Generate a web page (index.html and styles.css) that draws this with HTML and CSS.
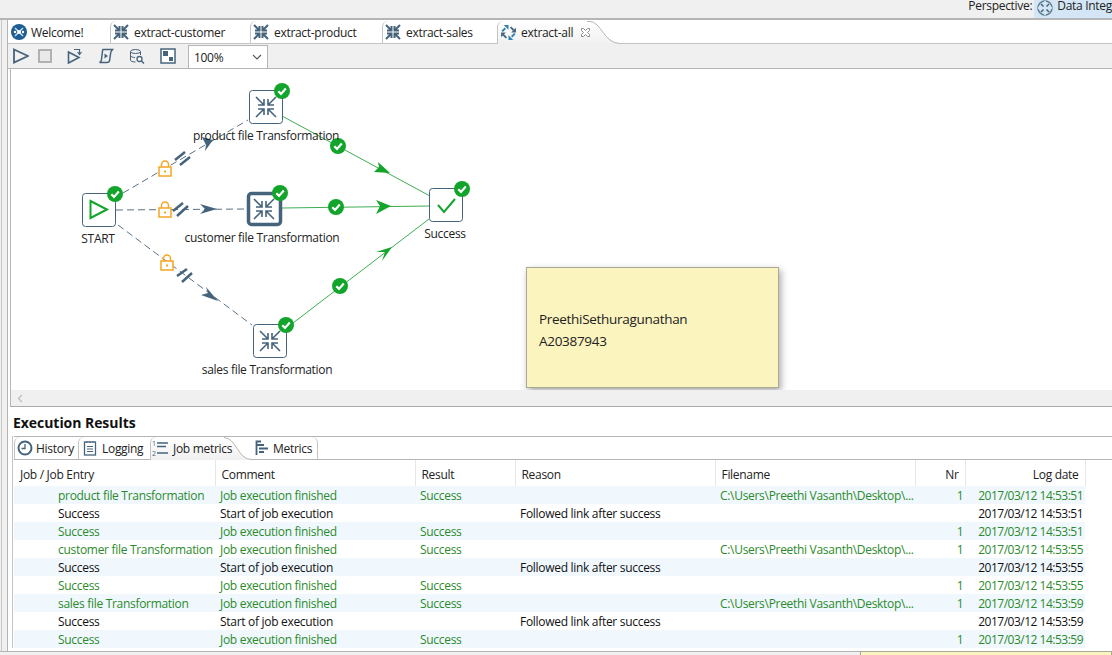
FILE: index.html
```html
<!DOCTYPE html>
<html lang="en">
<head>
    <meta charset="UTF-8">
    <meta name="viewport" content="width=device-width, initial-scale=1.0">
    <title>extract-all</title>
    <link rel="stylesheet" href="styles.css">
</head>
<body>
    <svg class="defs" width="0" height="0">
        <defs>
            <linearGradient id="activeFill" x1="0" y1="0" x2="0" y2="1">
                <stop offset="0" stop-color="#fff"/>
                <stop offset="1" stop-color="#f0f0f0"/>
            </linearGradient>
            <symbol id="compress" viewBox="0 0 24 24">
                <g fill="none" stroke="#46637c" stroke-width="1.6">
                    <path d="M2 2 10 10M10 4V10H4"/>
                    <path d="M22 2 14 10M14 4V10H20"/>
                    <path d="M2 22 10 14M10 20V14H4"/>
                    <path d="M22 22 14 14M14 20V14H20"/>
                </g>
            </symbol>
            <symbol id="compress-bold" viewBox="0 0 16 16">
                <g fill="none" stroke="#46637c" stroke-width="2">
                    <path d="M1 1 6 6M6.500 2V6.500H2"/>
                    <path d="M15 1 10 6M9.500 2V6.500H14"/>
                    <path d="M1 15 6 10M6.500 14V9.500H2"/>
                    <path d="M15 15 10 10M9.500 14V9.500H14"/>
                </g>
            </symbol>
            <symbol id="badge" viewBox="0 0 16 16">
                <circle cx="8" cy="8" r="8" fill="#13a52b"/>
                <path d="M4.300 8.200 7 10.900 11.800 5.600" fill="none" stroke="#fff" stroke-width="2.200"/>
            </symbol>
            <symbol id="lock" viewBox="0 0 14 17">
                <path d="M3.500 7V4.500a3.500 3.500 0 0 1 7 0V7" fill="none" stroke="#f5a623" stroke-width="1.500"/>
                <rect x="1" y="7" width="12" height="9" fill="#fff" stroke="#f5a623" stroke-width="1.500"/>
                <rect x="6" y="10.500" width="2" height="2" fill="#f5a623"/>
            </symbol>
        </defs>
    </svg>

    <div class="topbar">
        <span class="perspective-label">Perspective:</span>
        <span class="perspective-btn">
            <svg width="16" height="16" viewBox="0 0 16 16"><circle cx="8" cy="8" r="7" fill="none" stroke="#5f7f96" stroke-width="1.500"/><path d="M8 1V15M1 8H15" stroke="#d4e6f5" stroke-width="2"/><path d="M4 4 6.500 6.500M12 4 9.500 6.500M4 12 6.500 9.500M12 12 9.500 9.500" stroke="#46637c" stroke-width="1.500"/></svg>
            Data Integ
        </span>
    </div>

    <div class="shell">
        <div class="editor-tabs">
            <div class="tab tab-welcome">
                <svg width="16" height="16" viewBox="0 0 16 16"><circle cx="8" cy="8" r="8" fill="#1d5f95"/><path d="M4 4 12 12M12 4 4 12" stroke="#cfe6f7" stroke-width="1.400"/><circle cx="8" cy="8" r="2" fill="#fff"/><circle cx="4" cy="8" r="1.200" fill="#fff"/><circle cx="12" cy="8" r="1.200" fill="#fff"/></svg>
                Welcome!
            </div>
            <div class="tab tab-customer"><svg width="16" height="16"><use href="#compress-bold"/></svg>extract-customer</div>
            <div class="tab tab-product"><svg width="16" height="16"><use href="#compress-bold"/></svg>extract-product</div>
            <div class="tab tab-sales"><svg width="16" height="16"><use href="#compress-bold"/></svg>extract-sales</div>
            <div class="tab tab-all">
                <svg width="17" height="17" viewBox="0 0 16 16">
                    <g fill="none" stroke-width="1.800">
                        <path d="M2 7 5 4" stroke="#2f7fb0"/><path d="M10 3 13 6" stroke="#46637c"/>
                        <path d="M14 9 11 12" stroke="#2f7fb0"/><path d="M6 13 3 10" stroke="#46637c"/>
                    </g>
                    <path d="M8 1H3.500L8 5.500Z" fill="#2f7fb0"/><path d="M15 8V3.500L10.500 8Z" fill="#46637c"/>
                    <path d="M8 15H12.500L8 10.500Z" fill="#2f7fb0"/><path d="M1 8V12.500L5.500 8Z" fill="#46637c"/>
                </svg>
                extract-all
                <svg class="tab-close" width="11" height="11" viewBox="0 0 11 11"><path d="M1.500 1.500H3.500L5.500 3.500 7.500 1.500H9.500V3.500L7.500 5.500 9.500 7.500V9.500H7.500L5.500 7.500 3.500 9.500H1.500V7.500L3.500 5.500 1.500 3.500Z" fill="#fff" stroke="#8a8a8a"/></svg>
                <svg class="tab-curve" width="33" height="23" viewBox="0 0 33 23"><path d="M0 0H3C14 0 17 22 33 22V23H0Z" fill="url(#activeFill)"/><path d="M0 .5H3C14 .5 17 22.500 33 22.500" fill="none" stroke="#b5b5b5"/></svg>
            </div>
        </div>

        <div class="toolbar">
            <svg class="tool tool-play" width="16" height="16" viewBox="0 0 16 16"><path d="M1 1.500 15 8 1 14.500Z" fill="none" stroke="#46637c" stroke-width="1.800"/></svg>
            <svg class="tool tool-stop" width="16" height="16" viewBox="0 0 16 16"><rect x="2" y="2" width="12" height="12" fill="#e9e9e9" stroke="#ababab" stroke-width="1.800"/></svg>
            <svg class="tool" width="16" height="16" viewBox="0 0 16 16"><path d="M1.500 4 12 9.500 1.500 15Z" fill="none" stroke="#46637c" stroke-width="1.600"/><path d="M7 1.500H12.500V5.500M14.500 4 12.500 6.500 10.500 4" fill="none" stroke="#46637c" stroke-width="1.200"/></svg>
            <svg class="tool" width="16" height="16" viewBox="0 0 16 16"><path d="M5 1.500H14.500C13 3 12.500 4 12.500 6L11.500 13C11 14.500 10 14.500 9 14.500H1.500C3 14 3.500 13 3.500 11.500L4.500 3C4.500 2 4.700 1.800 5 1.500Z" fill="none" stroke="#46637c" stroke-width="1.500"/><path d="M6.500 5.500 10 8 6.500 10.500Z" fill="#46637c"/></svg>
            <svg class="tool" width="16" height="16" viewBox="0 0 16 16"><ellipse cx="6.500" cy="3.500" rx="5" ry="2" fill="none" stroke="#46637c"/><path d="M1.500 3.500V12C1.500 13 3 14 6.500 14M11.500 3.500V7M1.500 7.500C2 9 4 9.500 6 9.500" fill="none" stroke="#46637c"/><circle cx="10.500" cy="11" r="2.500" fill="#fff" stroke="#46637c" stroke-width="1.300"/><path d="M12.500 13 15 15.500" stroke="#46637c" stroke-width="1.500"/></svg>
            <svg class="tool tool-last" width="16" height="16" viewBox="0 0 16 16"><rect x="1" y="1" width="14" height="14" fill="#fff" stroke="#46637c" stroke-width="1.500"/><rect x="3" y="3" width="5" height="5" fill="#46637c"/><rect x="9" y="9" width="4" height="4" fill="#46637c"/></svg>
            <div class="zoom-select">100%
                <svg width="10" height="6" viewBox="0 0 10 6"><path d="M1 1 5 5 9 1" fill="none" stroke="#555" stroke-width="1.100"/></svg>
            </div>
        </div>

        <div class="canvas">
            <svg class="diagram" width="1101" height="321" viewBox="11 69 1101 321">
                <!-- hops from START -->
                <g stroke="#5a7184" stroke-width="1" stroke-dasharray="7 4" fill="none">
                    <path d="M123 193 248 120"/>
                    <path d="M116 210 247 209"/>
                    <path d="M118 225 252 325"/>
                </g>
                <g fill="#46637c">
                    <path d="M213 140 202 137 206 145 205 151Z"/>
                    <path d="M217 209 200 204 205 209 200 214Z"/>
                    <path d="M218 301 206 287 208 293 201 295Z"/>
                </g>
                <g stroke="#46637c" stroke-width="2.500">
                    <path d="M175 160 185 152M180 165 190 157"/>
                    <path d="M173 211 183 203M177 216 188 206"/>
                    <path d="M177 276 187 269M182 282 192 273"/>
                </g>
                <use href="#lock" x="158" y="160" width="14" height="17"/>
                <use href="#lock" x="158" y="201" width="14" height="17"/>
                <use href="#lock" x="160" y="254" width="14" height="17"/>

                <!-- hops to Success -->
                <g stroke="#3fae52" stroke-width="1" fill="none">
                    <path d="M282 116 430 196"/>
                    <path d="M282 208 430 206"/>
                    <path d="M293 323 429 219"/>
                </g>
                <g fill="#13a52b">
                    <path d="M390 173 378 162 379 167 374 172Z"/>
                    <path d="M391 206 376 200 380 206 376 214Z"/>
                    <path d="M392 247 376 252 385 252 382 261Z"/>
                </g>
                <use href="#badge" x="330" y="138" width="16" height="16"/>
                <use href="#badge" x="328" y="199" width="16" height="16"/>
                <use href="#badge" x="332" y="278" width="16" height="16"/>

                <!-- entries -->
                <g fill="#fff" stroke="#46637c">
                    <rect x="82.500" y="193.500" width="33" height="33" rx="3"/>
                    <rect x="249.500" y="90.500" width="33" height="33" rx="3"/>
                    <rect x="248.500" y="193.500" width="32" height="31" rx="3" stroke-width="3.500"/>
                    <rect x="429.500" y="188.500" width="33" height="33" rx="3"/>
                    <rect x="253.500" y="324.500" width="33" height="33" rx="3"/>
                </g>
                <path d="M90.500 201 107 209.500 90.500 218Z" fill="none" stroke="#13a52b" stroke-width="2"/>
                <path d="M438 205 444 212 455 199" fill="none" stroke="#13a52b" stroke-width="2"/>
                <use href="#compress" x="254" y="95" width="24" height="24"/>
                <use href="#compress" x="252" y="197" width="24" height="24"/>
                <use href="#compress" x="258" y="329" width="24" height="24"/>
                <use href="#badge" x="274" y="83" width="16" height="16"/>
                <use href="#badge" x="107" y="186" width="16" height="16"/>
                <use href="#badge" x="272" y="185" width="16" height="16"/>
                <use href="#badge" x="454" y="181" width="16" height="16"/>
                <use href="#badge" x="278" y="317" width="16" height="16"/>

                <g class="entry-label" text-anchor="middle">
                    <text x="266" y="140">product file Transformation</text>
                    <text x="98" y="243">START</text>
                    <text x="262" y="242">customer file Transformation</text>
                    <text x="445" y="238">Success</text>
                    <text x="267" y="374">sales file Transformation</text>
                </g>
            </svg>
            <div class="note">PreethiSethuragunathan<br>A20387943</div>
        </div>
        <div class="hscroll">
            <svg width="6" height="9" viewBox="0 0 6 9"><path d="M5 1 1.500 4.500 5 8" fill="none" stroke="#bdbdbd" stroke-width="1.300"/></svg>
        </div>

        <h2 class="results-title">Execution Results</h2>
        <div class="results-body">
            <div class="result-tabs">
                <div class="rtab rtab-history">
                    <svg width="16" height="16" viewBox="0 0 16 16"><circle cx="8" cy="8" r="6.500" fill="#fff" stroke="#46637c" stroke-width="2"/><path d="M8 4V8.500H4.500" fill="none" stroke="#46637c" stroke-width="1.300"/></svg>
                    History
                </div>
                <div class="rtab rtab-logging">
                    <svg width="16" height="16" viewBox="0 0 16 16"><rect x="2.500" y="2" width="11" height="13" fill="#fff" stroke="#46637c" stroke-width="1.300"/><path d="M5 1V3M8 1V3M11 1V3M5 6.500H11M5 9H11M5 11.500H11" stroke="#46637c"/></svg>
                    Logging
                </div>
                <div class="rtab rtab-job">
                    <svg width="18" height="18" viewBox="0 0 18 18"><path d="M5 3H16M5 6.500H14M5 13H16" stroke="#46637c" stroke-width="1.300"/><text class="tiny" x="0" y="6">1</text><text class="tiny" x="0" y="16">2</text></svg>
                    Job metrics
                    <svg class="rtab-curve" width="27" height="23" viewBox="0 0 27 23"><path d="M0 0C12 0 14 22 27 22V23H0Z" fill="url(#activeFill)"/><path d="M0 .5C12 .5 14 22.500 27 22.500" fill="none" stroke="#b5b5b5"/></svg>
                </div>
                <div class="rtab rtab-metrics">
                    <svg width="16" height="16" viewBox="0 0 16 16"><path d="M2.500 15V1.500H7M2.500 5H10M5 8.500H14M5 12H10" fill="none" stroke="#46637c" stroke-width="1.800"/></svg>
                    Metrics
                </div>
            </div>

            <table class="metrics-table">
                <colgroup>
                    <col class="c-entry"><col class="c-comment"><col class="c-result"><col class="c-reason"><col class="c-file"><col class="c-nr"><col class="c-date">
                </colgroup>
                <thead>
                    <tr><th>Job / Job Entry</th><th>Comment</th><th>Result</th><th>Reason</th><th>Filename</th><th class="num">Nr</th><th class="num">Log date</th></tr>
                </thead>
                <tbody>
                    <tr class="ok"><td class="entry">product file Transformation</td><td>Job execution finished</td><td>Success</td><td></td><td>C:\Users\Preethi Vasanth\Desktop\...</td><td class="num">1</td><td class="num">2017/03/12 14:53:51</td></tr>
                    <tr><td class="entry">Success</td><td>Start of job execution</td><td></td><td>Followed link after success</td><td></td><td class="num"></td><td class="num">2017/03/12 14:53:51</td></tr>
                    <tr class="ok"><td class="entry">Success</td><td>Job execution finished</td><td>Success</td><td></td><td></td><td class="num">1</td><td class="num">2017/03/12 14:53:51</td></tr>
                    <tr class="ok"><td class="entry">customer file Transformation</td><td>Job execution finished</td><td>Success</td><td></td><td>C:\Users\Preethi Vasanth\Desktop\...</td><td class="num">1</td><td class="num">2017/03/12 14:53:55</td></tr>
                    <tr><td class="entry">Success</td><td>Start of job execution</td><td></td><td>Followed link after success</td><td></td><td class="num"></td><td class="num">2017/03/12 14:53:55</td></tr>
                    <tr class="ok"><td class="entry">Success</td><td>Job execution finished</td><td>Success</td><td></td><td></td><td class="num">1</td><td class="num">2017/03/12 14:53:55</td></tr>
                    <tr class="ok"><td class="entry">sales file Transformation</td><td>Job execution finished</td><td>Success</td><td></td><td>C:\Users\Preethi Vasanth\Desktop\...</td><td class="num">1</td><td class="num">2017/03/12 14:53:59</td></tr>
                    <tr><td class="entry">Success</td><td>Start of job execution</td><td></td><td>Followed link after success</td><td></td><td class="num"></td><td class="num">2017/03/12 14:53:59</td></tr>
                    <tr class="ok"><td class="entry">Success</td><td>Job execution finished</td><td>Success</td><td></td><td></td><td class="num">1</td><td class="num">2017/03/12 14:53:59</td></tr>
                </tbody>
            </table>
        </div>
    </div>
    <div class="bottom-bar">
        <div class="bottom-note"></div>
    </div>
</body>
</html>
```

FILE: styles.css
```css
* {
    box-sizing: border-box;
}

html,
body {
    margin: 0;
    height: 655px;
    overflow: hidden;
}

body {
    position: relative;
    font-family: "Open Sans", "Noto Sans", sans-serif;
    font-size: 12px;
    letter-spacing: -0.3px;
    color: #222;
    background: linear-gradient(90deg, #f0f0f0 1px, #c8c8c8 1px, #c8c8c8 2px, #f0f0f0 2px);
}

.defs {
    position: absolute;
}

.topbar {
    height: 20px;
    background: #f0f0f0;
    border-bottom: 2px solid #b5b5b5;
    display: flex;
    justify-content: flex-end;
    align-items: flex-start;
    overflow: hidden;
    white-space: nowrap;
}

.perspective-label {
    margin-right: 2px;
    line-height: 12px;
}

.perspective-btn {
    flex: 0 0 77px;
    height: 18px;
    display: flex;
    gap: 4px;
    padding-left: 3px;
    line-height: 12px;
    background: #d4e6f5;
}

.perspective-btn svg {
    flex: none;
}

.shell {
    height: 631px;
    margin-left: 7px;
    border-left: 1px solid #b5b5b5;
    background: #fff;
    overflow: hidden;
}

.editor-tabs {
    height: 24px;
    padding-top: 1px;
    display: flex;
    border-bottom: 1px solid #c4c4c4;
    background: #fff;
}

.tab {
    display: flex;
    align-items: center;
    gap: 5px;
    height: 22px;
    padding-left: 2px;
    background: #fff;
    border-left: 1px solid #c4c4c4;
    border-top-left-radius: 6px;
    position: relative;
    white-space: nowrap;
}

.tab svg {
    flex: none;
}

.tab-welcome {
    width: 102px;
    border-left: none;
    padding-left: 3px;
    gap: 4px;
}

.tab-customer {
    width: 140px;
}

.tab-product {
    width: 132px;
}

.tab-sales {
    width: 115px;
}

.tab-all {
    width: 90px;
    height: 23px;
    gap: 4px;
    background: linear-gradient(#fff, #f0f0f0);
    z-index: 1;
}

.tab-close {
    margin-left: 3px;
}

.tab-curve {
    position: absolute;
    left: 89px;
    top: 0;
    z-index: -1;
}

.toolbar {
    height: 25px;
    display: flex;
    align-items: center;
    background: #f0f0f0;
    padding-left: 5px;
    border-bottom: 1px solid #b5b5b5;
}

.tool {
    margin-right: 15px;
    flex: none;
}

.tool-play {
    margin-right: 8px;
}

.tool-stop {
    margin-right: 14px;
}

.tool-last {
    margin-right: 12px;
}

.zoom-select {
    width: 80px;
    height: 23px;
    margin-top: 1px;
    padding: 0 5px;
    display: flex;
    justify-content: space-between;
    align-items: center;
    background: #fff;
    border: 1px solid #b5b5b5;
    border-bottom: none;
}

.canvas {
    position: relative;
    height: 321px;
    margin-left: 2px;
    border-left: 1px solid #b5b5b5;
    overflow: hidden;
    background: #fff;
}

.diagram {
    display: block;
}

.entry-label {
    font-size: 12px;
    fill: #222;
}

.note {
    position: absolute;
    left: 515px;
    top: 198px;
    width: 253px;
    height: 121px;
    padding: 40px 12px 0;
    font-size: 13.500px;
    line-height: 22px;
    color: #222;
    background: #fbf4bf;
    border: 1px solid #aba899;
    box-shadow: 2px 3px 7px rgba(0, 0, 0, 0.35);
}

.hscroll {
    height: 17px;
    margin-left: 2px;
    border-left: 1px solid #b5b5b5;
    border-bottom: 1px solid #aaa;
    background: #f0f0f0;
    padding-left: 6px;
    display: flex;
    align-items: center;
}

.results-title {
    margin: 0 0 0 5px;
    height: 29px;
    padding-top: 6px;
    font-size: 14px;
    line-height: 20px;
    font-weight: 700;
    color: #111;
    letter-spacing: -0.05px;
}

.results-body {
    margin-left: 4px;
    padding-left: 1px;
    border-left: 1px solid #c4c4c4;
}

.result-tabs {
    height: 24px;
    display: flex;
    border-top: 1px solid #b5b5b5;
    border-bottom: 1px solid #b5b5b5;
}

.rtab {
    display: flex;
    align-items: center;
    gap: 3px;
    height: 22px;
    padding-left: 2px;
    position: relative;
    flex: none;
    white-space: nowrap;
    border-left: 1px solid #c4c4c4;
    border-top-left-radius: 6px;
}

.rtab svg {
    flex: none;
}

.rtab-history {
    width: 64px;
}

.rtab-logging {
    width: 72px;
    gap: 4px;
    padding-left: 3px;
}

.rtab-job {
    width: 74px;
    height: 23px;
    padding-left: 1px;
    gap: 3px;
    background: linear-gradient(#fff, #f0f0f0);
    z-index: 1;
}

.rtab-curve {
    position: absolute;
    left: 73px;
    top: 0;
    z-index: -1;
}

.rtab-metrics {
    width: 68px;
    margin-left: 26px;
    padding-left: 4px;
    gap: 3px;
    border-left: none;
    border-top-left-radius: 0;
    border-right: 1px solid #c4c4c4;
    border-top-right-radius: 6px;
}

.tiny {
    font-size: 7px;
    fill: #46637c;
}

.metrics-table {
    table-layout: fixed;
    border-collapse: collapse;
    width: 1071px;
}

.c-entry {
    width: 201px;
}

.c-comment {
    width: 200px;
}

.c-result {
    width: 100px;
}

.c-reason {
    width: 200px;
}

.c-file {
    width: 200px;
}

.c-nr {
    width: 50px;
}

.c-date {
    width: 120px;
}

.metrics-table th {
    height: 26px;
    padding: 2px 6px 0;
    text-align: left;
    font-weight: 400;
    color: #222;
    border-right: 1px solid #e6e6e6;
}

.metrics-table td {
    height: 18px;
    padding: 0 1px 0 5px;
    white-space: nowrap;
    overflow: hidden;
    color: #111;
}

.metrics-table th.num,
.metrics-table td.num {
    text-align: right;
}

.metrics-table td.num {
    padding-right: 2px;
    letter-spacing: -0.5px;
}

.metrics-table td.entry {
    padding-left: 44px;
}

.metrics-table tbody tr:nth-child(odd) {
    background: #f0f8fe;
}

.metrics-table tr.ok td {
    color: #2b8a2b;
}

.bottom-bar {
    height: 4px;
    display: flex;
    justify-content: flex-end;
    background: #f0f0f0;
    border-top: 1px solid #b5b5b5;
}

.bottom-note {
    width: 252px;
    background: #fbf4bf;
    border: 1px solid #aba899;
    margin-top: -1px;
    margin-bottom: -1px;
}
```
